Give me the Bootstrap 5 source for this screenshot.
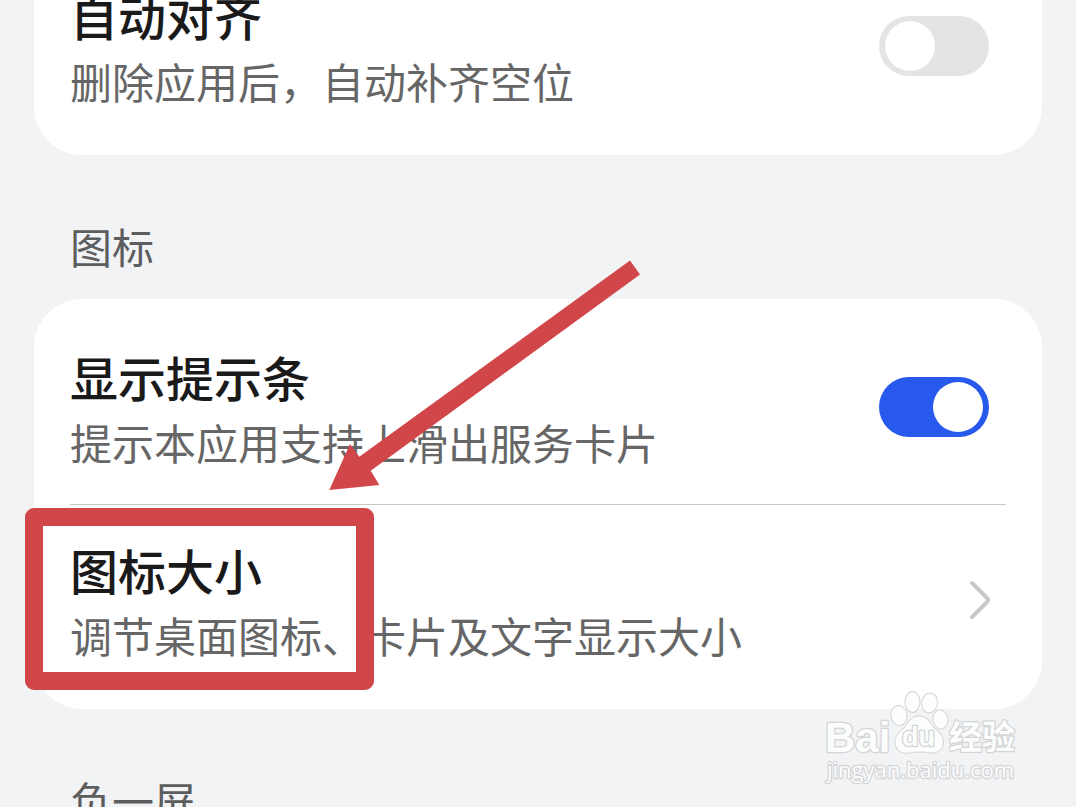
<!DOCTYPE html>
<html lang="zh-CN">
<head>
<meta charset="utf-8">
<meta name="viewport" content="width=device-width, initial-scale=1">
<title>桌面设置</title>
<link href="https://cdn.jsdelivr.net/npm/bootstrap@5.3.0/dist/css/bootstrap.min.css" rel="stylesheet">
<style>
  body { background: #f2f3f5; font-family: "Noto Sans CJK SC", sans-serif; }
  .screen { height: 100vh; padding: 0 34px; }
  .panel { background: #fff; border: 0; border-radius: 48px; padding: 0 36px; }
  .panel-scrolled { margin-top: -62px; }
  .setting { padding: 42px 17px 31px 0; color: inherit; }
  .setting-last { padding-top: 29px; padding-bottom: 43px; }
  .setting-only { padding-bottom: 43px; }
  .setting-divider { height: 1px; background: #c8c8c9; }
  .title { font-size: 48px; line-height: 70px; font-weight: 500; color: #1a1a1a; }
  .desc { font-size: 42px; line-height: 62px; color: #666; }
  .section { font-size: 42px; line-height: 56px; font-weight: 400; color: #5c5d5f; padding: 63px 36px 25px; margin: 0; }
  .toggle.form-check-input { width: 110px; height: 60px; margin: 0; border: 0; border-radius: 30px; background: #e4e4e4; box-shadow: none; }
  .toggle::before { content: ""; display: block; width: 50px; height: 50px; margin: 5px 6px; border-radius: 50%; background: #fff; }
  .toggle.form-check-input:checked { background: #2659ec; }
  .toggle:checked::before { margin-left: 54px; }
  .highlight { left: -45px; top: 3px; width: 349px; height: 182px; border: 18px solid #d14648; border-radius: 9px; pointer-events: none; }
  .arrow { left: 286px; top: -49px; pointer-events: none; }
  .watermark { right: 52px; bottom: 18px; pointer-events: none; }
</style>
</head>
<body>
<main class="screen position-relative overflow-hidden">
  <section class="card panel panel-scrolled">
    <div class="setting setting-only d-flex align-items-center justify-content-between">
      <label for="align"><span class="title d-block">自动对齐</span><span class="desc d-block">删除应用后，自动补齐空位</span></label>
      <input class="form-check-input toggle flex-shrink-0" type="checkbox" role="switch" id="align">
    </div>
  </section>

  <h2 class="section">图标</h2>
  <section class="card panel">
    <div class="setting d-flex align-items-center justify-content-between">
      <label for="hint"><span class="title d-block">显示提示条</span><span class="desc d-block">提示本应用支持上滑出服务卡片</span></label>
      <input class="form-check-input toggle flex-shrink-0" type="checkbox" role="switch" id="hint" checked>
    </div>
    <div class="setting-divider"></div>
    <a href="#size" class="setting setting-last position-relative d-flex align-items-center justify-content-between text-decoration-none">
      <span><span class="title d-block">图标大小</span><span class="desc d-block">调节桌面图标、卡片及文字显示大小</span></span>
      <svg width="24" height="42" viewBox="0 0 24 42" overflow="visible" fill="none" stroke="#c8c8c8" stroke-width="4" stroke-linecap="round" stroke-linejoin="round" aria-hidden="true"><path d="M7 4 L22 19 Q24 21 22 23 L7 38"/></svg>
      <span class="highlight position-absolute"></span>
    </a>
    <svg class="arrow position-absolute" width="330" height="250" viewBox="320 250 330 250" fill="#d14648" aria-hidden="true"><path d="M630 260.500 L640 274.500 L370.700 470.700 L379.300 485 L329.300 490 L350 444 L359.300 456.700 Z"/></svg>
  </section>

  <h2 class="section">负一屏</h2>

  <svg class="watermark position-absolute" width="204" height="100" viewBox="820 689 204 100" role="img" aria-label="Baidu 经验" fill="#fcfdfd" stroke="#d2d4d6" stroke-width="2.500" paint-order="stroke" stroke-linejoin="round">
    <text x="825" y="752" font-family="Liberation Sans, sans-serif" font-weight="700" font-size="42">Bai</text>
    <g stroke-width="2">
      <ellipse cx="899" cy="715.500" rx="7.500" ry="9.500" transform="rotate(-8 899 715.500)"/>
      <ellipse cx="912.500" cy="702" rx="7" ry="10"/>
      <ellipse cx="929.500" cy="703" rx="7.500" ry="9.500" transform="rotate(10 929.500 703)"/>
      <ellipse cx="940.500" cy="719.500" rx="7" ry="9" transform="rotate(-8 940.500 719.500)"/>
      <path d="M919.500 716.500 C926 716.500 929 721 932 726 C936 731 943 734 943 742 C943 749 938 753 931 752.500 C923 751 916 751 909 752.500 C901 754 895 749 895.500 741 C896 733 903 731 907 725 C910 720 913 716.500 919.500 716.500 Z"/>
    </g>
    <text x="902" y="746" font-family="Liberation Sans, sans-serif" font-weight="700" font-size="27">du</text>
    <text x="949" y="749" font-family="Noto Sans CJK SC, sans-serif" font-weight="700" font-size="33">经验</text>
    <text x="827" y="778" font-family="Open Sans, sans-serif" font-size="22">jingyan.baidu.com</text>
  </svg>
</main>
<script src="https://cdn.jsdelivr.net/npm/bootstrap@5.3.0/dist/js/bootstrap.bundle.min.js"></script>
</body>
</html>
